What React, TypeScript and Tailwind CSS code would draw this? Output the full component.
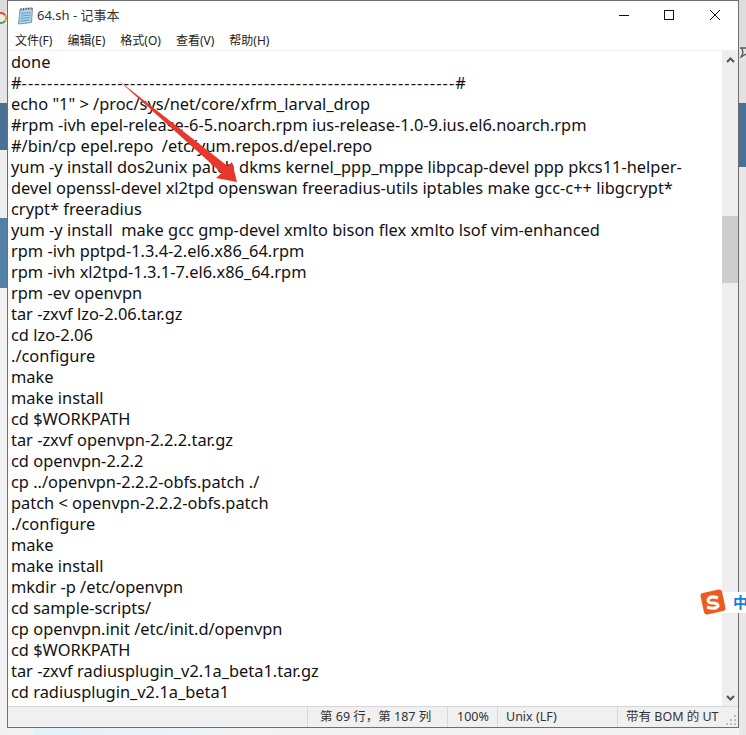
import React from 'react';

const dashes = '-'.repeat(68);

const lines = [
  'done',
  'yum -y install dos2unix patch dkms kernel_ppp_mppe libpcap-devel ppp pkcs11-helper-',
  'devel openssl-devel xl2tpd openswan freeradius-utils iptables make gcc-c++ libgcrypt*',
  'crypt* freeradius',
  'yum -y install  make gcc gmp-devel xmlto bison flex xmlto lsof vim-enhanced',
  'rpm -ivh pptpd-1.3.4-2.el6.x86_64.rpm',
  'rpm -ivh xl2tpd-1.3.1-7.el6.x86_64.rpm',
  'rpm -ev openvpn',
  'tar -zxvf lzo-2.06.tar.gz',
  'cd lzo-2.06',
  './configure',
  'make',
  'make install',
  'cd $WORKPATH',
  'tar -zxvf openvpn-2.2.2.tar.gz',
  'cd openvpn-2.2.2',
  'cp ../openvpn-2.2.2-obfs.patch ./',
  'patch < openvpn-2.2.2-obfs.patch',
  './configure',
  'make',
  'make install',
  'mkdir -p /etc/openvpn',
  'cd sample-scripts/',
  'cp openvpn.init /etc/init.d/openvpn',
  'cd $WORKPATH',
  'tar -zxvf radiusplugin_v2.1a_beta1.tar.gz',
  'cd radiusplugin_v2.1a_beta1',
];

const menus = ['文件(F)', '编辑(E)', '格式(O)', '查看(V)', '帮助(H)'];

const NotepadIcon = () => (
  <svg width="17" height="18" viewBox="0 0 17 18">
    <path d="M3 2.5 L15.5 1 L14.5 15.5 L1.5 17 Z" fill="#a8d4ee" stroke="#7d97a8" />
    <path d="M4 6.5 L13.5 5.5 M4 9 L13.5 8 M3.7 11.5 L13 10.5 M3.5 14 L12.5 13" stroke="#6d9dbd" />
    <path d="M4 1 V3.5 M6.5 1 V3.5 M9 0.5 V3 M11.5 0.5 V3 M14 0.5 V2.5" stroke="#666" />
  </svg>
);

export default function App() {
  return (
    <div className="relative flex h-[735px] w-[746px] overflow-hidden bg-[#f0f0f0] font-['Noto_Sans','Noto_Sans_CJK_SC',sans-serif]">
      {/* desktop peeking out on the left */}
      <div className="flex w-[7px] shrink-0 flex-col bg-[#ececec]">
        <div className="h-[12px] bg-[#dcdcdc]" />
        <svg width="7" height="12" viewBox="0 0 7 12" className="shrink-0">
          <circle cx="1" cy="6" r="5" fill="none" stroke="#d9a62e" strokeWidth="2" />
          <path d="M-3 3 A5 5 0 0 1 5 3" fill="none" stroke="#d4503f" strokeWidth="2" />
          <path d="M5 9 A5 5 0 0 1 -3 9" fill="none" stroke="#4a9f5c" strokeWidth="2" />
        </svg>
        <div className="h-[79px] bg-[#e6e6e6]" />
        <div className="h-[47px] bg-[#4a7096]" />
        <div className="h-[68px] bg-[#eeeeee]" />
        <div className="h-[70px] bg-[#5580a6]" />
        <div className="flex-1 bg-[#f1f1f1]" />
      </div>

      <div className="flex w-[732px] shrink-0 flex-col">
        <div className="flex h-[728px] flex-col border border-[#6e6e6e] bg-white">
          <div className="flex h-[30px] shrink-0 items-center pr-[7px] pl-[9px]">
            <NotepadIcon />
            <span className="ml-[3px] text-[13px] text-[#333]">64.sh - 记事本</span>
            <div className="ml-auto">
              <svg width="112" height="16" viewBox="0 0 112 16" fill="none" stroke="#111">
                <path d="M0 7.5 H10" />
                <rect x="45.5" y="2.5" width="9" height="9" />
                <path d="M91 2 L101 12 M101 2 L91 12" />
              </svg>
            </div>
          </div>
          <div className="flex h-[19px] shrink-0 items-center gap-[15px] pl-[7px] text-[12px] text-[#222]">
            {menus.map((m) => (
              <span key={m}>{m}</span>
            ))}
          </div>
          <div className="flex min-h-0 flex-1 border-t border-[#f0f0f0]">
            <div className="flex-1 overflow-hidden pl-[3px] text-[16.4px] leading-[21px] whitespace-pre text-[#111]">
              <div>{lines[0]}</div>
              <div>
                #<span className="tracking-[1.1px]">{dashes}</span>#
              </div>
              <div>echo "1" &gt; /proc/sys/net/core/xfrm_larval_drop</div>
              <div>#rpm -ivh epel-release-6-5.noarch.rpm ius-release-1.0-9.ius.el6.noarch.rpm</div>
              <div>#/bin/cp epel.repo  /etc/yum.repos.d/epel.repo</div>
              {lines.slice(1).map((l, i) => (
                <div key={i}>{l}</div>
              ))}
            </div>
            <div className="flex w-[16px] shrink-0 flex-col bg-[#eeeeee]">
              <div className="flex h-[17px] items-center justify-center">
                <svg width="9" height="6" viewBox="0 0 9 6" fill="none" stroke="#555" strokeWidth="2">
                  <path d="M1 5 L4.5 1.5 L8 5" />
                </svg>
              </div>
              <div className="mt-[148px] h-[67px] bg-[#cdcdcd]" />
              <div className="mt-auto flex h-[17px] items-center justify-center">
                <svg width="9" height="6" viewBox="0 0 9 6" fill="none" stroke="#555" strokeWidth="2">
                  <path d="M1 1 L4.5 4.5 L8 1" />
                </svg>
              </div>
            </div>
          </div>
          <div className="flex h-[21px] shrink-0 items-center border-t border-[#d7d7d7] bg-[#f0f0f0] text-[12.5px] text-[#333]">
            <div className="w-[299px]" />
            <div className="flex h-full w-[140px] items-center border-l border-[#d7d7d7] pl-[12px]">第 69 行，第 187 列</div>
            <div className="flex h-full w-[50px] items-center border-l border-[#d7d7d7] pl-[9px]">100%</div>
            <div className="flex h-full w-[120px] items-center border-l border-[#d7d7d7] pl-[8px]">Unix (LF)</div>
            <div className="flex h-full flex-1 items-center border-l border-[#d7d7d7] pl-[8px]">
              <span>带有 BOM 的 UT</span>
              <svg className="mt-[6px] ml-auto shrink-0" width="12" height="12" viewBox="0 0 12 12" fill="#bdbdbd">
                <rect x="8" y="1" width="2" height="2" />
                <rect x="4" y="5" width="2" height="2" />
                <rect x="8" y="5" width="2" height="2" />
                <rect x="0" y="9" width="2" height="2" />
                <rect x="4" y="9" width="2" height="2" />
                <rect x="8" y="9" width="2" height="2" />
              </svg>
            </div>
          </div>
        </div>
        {/* wallpaper under the window */}
        <div className="flex flex-1">
          <div className="w-[26px] bg-[#f3f3f3]" />
          <div className="w-[240px] bg-gradient-to-r from-[#e2f2fa] to-[#f4f4f4]" />
          <div className="flex-1 bg-[#f3f3f3]" />
        </div>
      </div>

      {/* desktop peeking out on the right */}
      <div className="flex flex-1 flex-col bg-[#e4e4e4]">
        <div className="h-[46px] bg-[#dedede]" />
        <svg width="7" height="12" viewBox="0 0 7 12" className="shrink-0" fill="none" stroke="#555" strokeWidth="1.3">
          <path d="M1 2 H7 M3 2 L4 7 L2 11 L7 8" />
        </svg>
        <div className="h-[45px] bg-[#e2e2e2]" />
        <div className="h-[64px] bg-[#4a7096]" />
        <div className="flex-1 bg-[#e8e8e8]" />
      </div>

      {/* red annotation arrow */}
      <svg className="absolute top-0 left-0" width="746" height="735" viewBox="0 0 746 735">
        <path d="M118 80 L227.5 166 L232 162 L237 182 L216 178 L221.5 173 Z" fill="#e8382e" />
      </svg>

      {/* input method badge */}
      <div className="absolute top-[592px] left-[700px] flex h-[21px] w-[46px] items-center rounded-l-[2px] bg-white pl-[33px] text-[15px] font-bold text-[#1a7fd4]">
        中
      </div>
      <svg className="absolute top-[588px] left-[699px]" width="28" height="28" viewBox="0 0 28 28">
        <rect x="3" y="3" width="22" height="22" rx="3" fill="#ee5a20" transform="rotate(-12 14 14)" />
        <path d="M19 10 Q11 7 9 12 Q9 15 14 15 Q19 15 19 18 Q16 22 8 19" fill="none" stroke="#fff" strokeWidth="3" />
      </svg>
    </div>
  );
}
